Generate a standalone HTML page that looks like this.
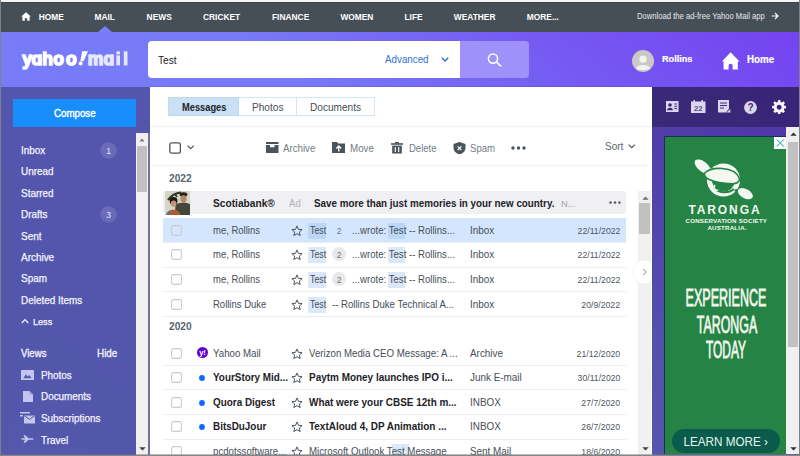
<!DOCTYPE html>
<html><head><meta charset="utf-8"><style>
html,body{margin:0;padding:0;width:800px;height:456px;overflow:hidden;background:#fff}
body{position:relative;font-family:"Liberation Sans",sans-serif}
.r{position:absolute;display:block}
.t{position:absolute;white-space:nowrap}
.logo{font-family:"Liberation Sans",sans-serif;font-weight:bold;font-size:19px;line-height:19px;color:#fff;letter-spacing:-0.2px;transform-origin:0 0;transform:scaleX(1.1)}
</style></head><body>
<div class="r" style="left:0px;top:0px;width:800px;height:456px;background:linear-gradient(40deg,#787ef7 0%,#777af7 55%,#7558f2 78%,#7440f0 100%);"></div>
<div class="r" style="left:0px;top:0px;width:800px;height:2px;background:#f4f4f6;"></div>
<div class="r" style="left:0px;top:2px;width:800px;height:1px;background:#3c434a;"></div>
<div class="r" style="left:0px;top:3px;width:800px;height:29px;background:#464e56;"></div>
<svg class="r" style="left:21px;top:12px;" width="10" height="9" viewBox="0 0 10 9"><path d="M5 0.3 L9.8 4.6 L8.6 4.6 L8.6 8.8 L6.2 8.8 L6.2 6.2 L3.8 6.2 L3.8 8.8 L1.4 8.8 L1.4 4.6 L0.2 4.6 Z" fill="#fff"/></svg>
<div class="t" style="left:38.70px;top:13.00px;font-size:8.4px;line-height:8.4px;color:#fff;font-weight:bold;">HOME</div>
<div class="t" style="left:94.50px;top:13.00px;font-size:8.4px;line-height:8.4px;color:#fff;font-weight:bold;">MAIL</div>
<div class="t" style="left:146.60px;top:13.00px;font-size:8.4px;line-height:8.4px;color:#fff;font-weight:bold;">NEWS</div>
<div class="t" style="left:203.00px;top:13.00px;font-size:8.4px;line-height:8.4px;color:#fff;font-weight:bold;">CRICKET</div>
<div class="t" style="left:272.00px;top:13.00px;font-size:8.4px;line-height:8.4px;color:#fff;font-weight:bold;">FINANCE</div>
<div class="t" style="left:340.40px;top:13.00px;font-size:8.4px;line-height:8.4px;color:#fff;font-weight:bold;">WOMEN</div>
<div class="t" style="left:404.50px;top:13.00px;font-size:8.4px;line-height:8.4px;color:#fff;font-weight:bold;">LIFE</div>
<div class="t" style="left:453.75px;top:13.00px;font-size:8.4px;line-height:8.4px;color:#fff;font-weight:bold;">WEATHER</div>
<div class="t" style="left:526.75px;top:13.00px;font-size:8.4px;line-height:8.4px;color:#fff;font-weight:bold;">MORE...</div>
<div class="t" style="left:636.90px;top:13.00px;font-size:8.27px;line-height:8.27px;color:#e6e8eb;font-weight:normal;transform:scaleX(0.9259);transform-origin:0 0;">Download the ad-free Yahoo Mail app</div>
<svg class="r" style="left:771px;top:12px;" width="8" height="8" viewBox="0 0 8 8"><path d="M0.5 4 H7 M4 1 L7 4 L4 7" stroke="#fff" stroke-width="1.1" fill="none"/></svg>
<svg class="r" style="left:98px;top:26px;" width="14" height="6" viewBox="0 0 14 6"><path d="M0 6 L7 0 L14 6 Z" fill="#787ef7"/></svg>
<svg class="r" style="left:0;top:0" width="150" height="86" viewBox="0 0 150 86" font-family="Liberation Sans" font-weight="bold" font-size="17.5"><text x="22.3635" y="65.4" fill="#fff" stroke="#fff" stroke-width="1.5" stroke-linejoin="round">y</text><text x="31.5325" y="65.4" fill="#fff" stroke="#fff" stroke-width="1.5" stroke-linejoin="round">ɑ</text><text x="42.2785" y="65.4" fill="#fff" stroke="#fff" stroke-width="1.5" stroke-linejoin="round">h</text><text x="53.3175" y="65.4" fill="#fff" stroke="#fff" stroke-width="1.5" stroke-linejoin="round">o</text><text x="66.0675" y="65.4" fill="#fff" stroke="#fff" stroke-width="1.5" stroke-linejoin="round">o</text><text x="87.69675" y="65.4" fill="#e6e8ff" stroke="#e6e8ff" stroke-width="1.5" stroke-linejoin="round">m</text><text x="103.5325" y="65.4" fill="#e6e8ff" stroke="#e6e8ff" stroke-width="1.5" stroke-linejoin="round">ɑ</text><rect x="116.3" y="51.3" width="3.7" height="3.2" rx="1.2" fill="#e6e8ff"/><rect x="116.3" y="55.4" width="3.7" height="10" fill="#e6e8ff"/><rect x="123.8" y="51.3" width="3.7" height="14.1" fill="#e6e8ff"/><path d="M82.2 51.2 L88 51.2 L83.6 61.3 L80.3 61.3 Z" fill="#fff"/><circle cx="80.6" cy="63.4" r="2" fill="#fff"/></svg>
<div class="r" style="left:148px;top:40.5px;width:312px;height:37.0px;background:#fff;border-radius:4px 0 0 4px"></div>
<div class="r" style="left:460px;top:40.5px;width:69px;height:37.0px;background:#a091fa;border-radius:0 4px 4px 0"></div>
<div class="t" style="left:158.10px;top:55.00px;font-size:10.81px;line-height:10.81px;color:#1d2228;font-weight:normal;transform:scaleX(0.9434);transform-origin:0 0;">Test</div>
<div class="t" style="left:385.30px;top:54.00px;font-size:10.58px;line-height:10.58px;color:#2f6fd6;font-weight:normal;transform:scaleX(0.9259);transform-origin:0 0;">Advanced</div>
<svg class="r" style="left:441px;top:57px;" width="8" height="5" viewBox="0 0 8 5"><path d="M0.8 0.8 L4 4 L7.2 0.8" stroke="#2f6fd6" stroke-width="1.4" fill="none"/></svg>
<svg class="r" style="left:487px;top:53px;" width="16" height="14" viewBox="0 0 16 14"><circle cx="6" cy="5.6" r="4.6" stroke="#fff" stroke-width="1.5" fill="none"/><path d="M9.4 9 L14.2 13.4" stroke="#fff" stroke-width="1.6"/></svg>
<svg class="r" style="left:632px;top:50px;" width="22" height="22" viewBox="0 0 22 22"><circle cx="11" cy="11" r="11" fill="#c9c8c4"/><circle cx="11" cy="9.2" r="3.6" fill="#f3f3ef"/><path d="M4.2 18.2 C4.8 13.8 17.2 13.8 17.8 18.2 C15.8 20.8 6.2 20.8 4.2 18.2Z" fill="#f3f3ef"/></svg>
<div class="t" style="left:662.00px;top:54.00px;font-size:9.83px;line-height:9.83px;color:#fff;font-weight:bold;-webkit-text-stroke:0.2px #fff;transform:scaleX(0.9259);transform-origin:0 0;">Rollins</div>
<svg class="r" style="left:722px;top:51.5px;" width="18" height="18" viewBox="0 0 18 18"><path d="M8.6 0.3 L17.4 9.6 L15.8 9.6 L15.8 17.5 L10.6 17.5 L10.6 13.8 A2 2 0 0 0 6.6 13.8 L6.6 17.5 L1.6 17.5 L1.6 9.6 L0 9.6 Z" fill="#fff"/></svg>
<div class="t" style="left:747.40px;top:55.00px;font-size:10.34px;line-height:10.34px;color:#fff;font-weight:bold;-webkit-text-stroke:0.2px #fff;transform:scaleX(0.9434);transform-origin:0 0;">Home</div>
<div class="r" style="left:0px;top:87px;width:150px;height:369px;background:rgba(0,0,0,0.3);"></div>
<div class="r" style="left:13px;top:99px;width:123px;height:28px;background:#188dfc;"></div>
<div class="t" style="left:54.10px;top:108.00px;font-size:10.69px;line-height:10.69px;color:#fff;font-weight:normal;-webkit-text-stroke:0.4px #fff;transform:scaleX(0.9091);transform-origin:0 0;">Compose</div>
<div class="t" style="left:21.20px;top:146.00px;font-size:10.45px;line-height:10.45px;color:#f4f4ff;font-weight:normal;-webkit-text-stroke:0.25px #f4f4ff;transform:scaleX(0.9524);transform-origin:0 0;">Inbox</div>
<div class="t" style="left:21.20px;top:167.00px;font-size:10.45px;line-height:10.45px;color:#f4f4ff;font-weight:normal;-webkit-text-stroke:0.25px #f4f4ff;transform:scaleX(0.9524);transform-origin:0 0;">Unread</div>
<div class="t" style="left:21.20px;top:189.00px;font-size:10.45px;line-height:10.45px;color:#f4f4ff;font-weight:normal;-webkit-text-stroke:0.25px #f4f4ff;transform:scaleX(0.9524);transform-origin:0 0;">Starred</div>
<div class="t" style="left:21.20px;top:210.00px;font-size:10.45px;line-height:10.45px;color:#f4f4ff;font-weight:normal;-webkit-text-stroke:0.25px #f4f4ff;transform:scaleX(0.9524);transform-origin:0 0;">Drafts</div>
<div class="t" style="left:21.20px;top:232.00px;font-size:10.45px;line-height:10.45px;color:#f4f4ff;font-weight:normal;-webkit-text-stroke:0.25px #f4f4ff;transform:scaleX(0.9524);transform-origin:0 0;">Sent</div>
<div class="t" style="left:21.20px;top:253.00px;font-size:10.45px;line-height:10.45px;color:#f4f4ff;font-weight:normal;-webkit-text-stroke:0.25px #f4f4ff;transform:scaleX(0.9524);transform-origin:0 0;">Archive</div>
<div class="t" style="left:21.20px;top:274.00px;font-size:10.45px;line-height:10.45px;color:#f4f4ff;font-weight:normal;-webkit-text-stroke:0.25px #f4f4ff;transform:scaleX(0.9524);transform-origin:0 0;">Spam</div>
<div class="t" style="left:21.20px;top:296.00px;font-size:10.45px;line-height:10.45px;color:#f4f4ff;font-weight:normal;-webkit-text-stroke:0.25px #f4f4ff;transform:scaleX(0.9524);transform-origin:0 0;">Deleted Items</div>
<svg class="r" style="left:100px;top:142.3px;" width="17" height="17" viewBox="0 0 17 17"><circle cx="8.5" cy="8.5" r="8.3" fill="rgba(255,255,255,0.13)"/></svg>
<div class="t" style="left:100px;width:17px;text-align:center;top:146.90px;font-size:8.5px;line-height:8.5px;color:#e8e8ff">1</div>
<svg class="r" style="left:100px;top:206.1px;" width="17" height="17" viewBox="0 0 17 17"><circle cx="8.5" cy="8.5" r="8.3" fill="rgba(255,255,255,0.13)"/></svg>
<div class="t" style="left:100px;width:17px;text-align:center;top:210.70px;font-size:8.5px;line-height:8.5px;color:#e8e8ff">3</div>
<svg class="r" style="left:21.2px;top:317.8px;" width="8" height="6" viewBox="0 0 8 6"><path d="M0.8 5 L4 1.6 L7.2 5" stroke="#f4f4ff" stroke-width="1.3" fill="none"/></svg>
<div class="t" style="left:33.20px;top:317.00px;font-size:9.55px;line-height:9.55px;color:#f4f4ff;font-weight:normal;-webkit-text-stroke:0.25px #f4f4ff;transform:scaleX(0.9524);transform-origin:0 0;">Less</div>
<div class="t" style="left:21.00px;top:349.00px;font-size:10.08px;line-height:10.08px;color:#f4f4ff;font-weight:normal;-webkit-text-stroke:0.3px #f4f4ff;transform:scaleX(0.9524);transform-origin:0 0;">Views</div>
<div class="t" style="left:96.90px;top:349.00px;font-size:10.4px;line-height:10.4px;color:#f4f4ff;font-weight:normal;-webkit-text-stroke:0.3px #f4f4ff;transform:scaleX(0.9524);transform-origin:0 0;">Hide</div>
<div class="t" style="left:41.40px;top:371.00px;font-size:10.4px;line-height:10.4px;color:#f4f4ff;font-weight:normal;-webkit-text-stroke:0.25px #f4f4ff;transform:scaleX(0.9524);transform-origin:0 0;">Photos</div>
<div class="t" style="left:41.40px;top:392.00px;font-size:10.4px;line-height:10.4px;color:#f4f4ff;font-weight:normal;-webkit-text-stroke:0.25px #f4f4ff;transform:scaleX(0.9524);transform-origin:0 0;">Documents</div>
<div class="t" style="left:41.40px;top:414.00px;font-size:10.4px;line-height:10.4px;color:#f4f4ff;font-weight:normal;-webkit-text-stroke:0.25px #f4f4ff;transform:scaleX(0.9524);transform-origin:0 0;">Subscriptions</div>
<div class="t" style="left:41.40px;top:436.00px;font-size:10.4px;line-height:10.4px;color:#f4f4ff;font-weight:normal;-webkit-text-stroke:0.25px #f4f4ff;transform:scaleX(0.9524);transform-origin:0 0;">Travel</div>
<svg class="r" style="left:21px;top:369.5px;" width="13" height="10.5" viewBox="0 0 13 10.5"><rect x="0" y="0" width="13" height="10.5" rx="0.8" fill="#c3c6ee"/><path d="M2.3 8.3 L5 4.3 L6.6 6.6 L8.2 5 L10.7 8.3Z" fill="#5259ad"/></svg>
<svg class="r" style="left:22.5px;top:390.5px;" width="10" height="11" viewBox="0 0 10 11"><path d="M0 0 H6.5 L10 3.5 V11 H0Z" fill="#c3c6ee"/><path d="M6.5 0 V3.5 H10" fill="#9a9ed8"/></svg>
<svg class="r" style="left:20px;top:412px;" width="15" height="11.5" viewBox="0 0 15 11.5"><rect x="0" y="0" width="10" height="1.5" fill="#c3c6ee"/><rect x="0" y="3" width="3" height="1.5" fill="#c3c6ee"/><rect x="4" y="3.5" width="11" height="8" fill="#c3c6ee"/><path d="M4 3.5 L9.5 7.3 L15 3.5" stroke="#5259ad" stroke-width="1" fill="none"/></svg>
<svg class="r" style="left:21px;top:435px;" width="13" height="8" viewBox="0 0 13 8"><path d="M0.5 3.2 L4 3.2 L2.5 0.3 L4.3 0.3 L7.5 3.2 L11.5 3.2 C13 3.4 13 4.6 11.5 4.8 L7.5 4.8 L4.3 7.7 L2.5 7.7 L4 4.8 L0.5 4.8 Z" fill="#c3c6ee"/></svg>
<div class="r" style="left:135.7px;top:133.3px;width:12.300000000000011px;height:322.7px;background:#f0f0f0;"></div>
<div class="r" style="left:148px;top:133.3px;width:2px;height:322.7px;background:#74709c;"></div>
<div class="r" style="left:136.9px;top:146.1px;width:10.299999999999983px;height:46.099999999999994px;background:#c1c1c1;"></div>
<svg class="r" style="left:139px;top:137.5px;" width="6" height="4" viewBox="0 0 6 4"><path d="M0.4 3.6 L3 0.6 L5.6 3.6Z" fill="#7a7a7a"/></svg>
<svg class="r" style="left:138.5px;top:447px;" width="7" height="4" viewBox="0 0 7 4"><path d="M0.3 0.2 L3.5 3.6 L6.7 0.2Z" fill="#404040"/></svg>
<div class="r" style="left:150px;top:86px;width:502px;height:1px;background:rgba(20,20,90,0.12);"></div>
<div class="r" style="left:150px;top:87px;width:502px;height:369px;background:#fff;"></div>
<div class="r" style="left:168px;top:97px;width:206.5px;height:19.200000000000003px;background:#fff;box-sizing:border-box;border:1px solid #d4e5f6"></div>
<div class="r" style="left:168px;top:97px;width:70.6px;height:19.200000000000003px;background:#c9e0f5;box-sizing:border-box;border:1px solid #c2daf0"></div>
<div class="r" style="left:296.2px;top:97px;width:1.0px;height:19.200000000000003px;background:#d4e5f6;"></div>
<div class="t" style="left:181.60px;top:103.00px;font-size:10.23px;line-height:10.23px;color:#1d2228;font-weight:bold;transform:scaleX(0.9091);transform-origin:0 0;">Messages</div>
<div class="t" style="left:252.00px;top:102.00px;font-size:10.71px;line-height:10.71px;color:#464e56;font-weight:normal;transform:scaleX(0.9434);transform-origin:0 0;">Photos</div>
<div class="t" style="left:310.00px;top:102.00px;font-size:10.71px;line-height:10.71px;color:#464e56;font-weight:normal;transform:scaleX(0.9434);transform-origin:0 0;">Documents</div>
<div class="r" style="left:150px;top:125.5px;width:502px;height:1.0px;background:#eff1f4;"></div>
<svg class="r" style="left:168.5px;top:141.5px;" width="12.5" height="12" viewBox="0 0 12.5 12"><rect x="0.8" y="0.8" width="10.6" height="10.4" rx="2" stroke="#4d555d" stroke-width="1.3" fill="none"/></svg>
<svg class="r" style="left:186.5px;top:145px;" width="7.5" height="4.5" viewBox="0 0 7.5 4.5"><path d="M0.6 0.6 L3.7 3.6 L6.8 0.6" stroke="#4d555d" stroke-width="1.2" fill="none"/></svg>
<svg class="r" style="left:266px;top:142px;" width="12.5" height="11" viewBox="0 0 12.5 11"><rect x="0" y="0" width="12.5" height="2" fill="#4b535b"/><path d="M0 3 H4 V5.2 H8.5 V3 H12.5 V11 H0Z" fill="#4b535b"/></svg>
<div class="t" style="left:283.25px;top:144.00px;font-size:10.28px;line-height:10.28px;color:#737b83;font-weight:normal;transform:scaleX(0.9434);transform-origin:0 0;">Archive</div>
<svg class="r" style="left:331.5px;top:142px;" width="13.5" height="11" viewBox="0 0 13.5 11"><path d="M0 0 H5 L6.2 1.6 H13.5 V11 H0Z" fill="#4b535b"/><path d="M6.75 9.5 V4.2 M4.3 6.5 L6.75 4 L9.2 6.5" stroke="#fff" stroke-width="1.3" fill="none"/></svg>
<div class="t" style="left:350.00px;top:144.00px;font-size:10.39px;line-height:10.39px;color:#737b83;font-weight:normal;transform:scaleX(0.9434);transform-origin:0 0;">Move</div>
<svg class="r" style="left:391px;top:142px;" width="12" height="11.5" viewBox="0 0 12 11.5"><rect x="0" y="1.2" width="12" height="1.6" fill="#4b535b"/><rect x="4" y="0" width="4" height="1.5" fill="#4b535b"/><path d="M1.2 3.6 H10.8 V11.5 H1.2Z" fill="#4b535b"/><path d="M4.3 5 V10 M7.7 5 V10" stroke="#fff" stroke-width="1.1"/></svg>
<div class="t" style="left:408.50px;top:144.00px;font-size:10.07px;line-height:10.07px;color:#737b83;font-weight:normal;transform:scaleX(0.9434);transform-origin:0 0;">Delete</div>
<svg class="r" style="left:453px;top:141.5px;" width="13" height="12.5" viewBox="0 0 13 12.5"><path d="M6.5 0 L12.5 2 V6 C12.5 9.3 9.5 11.6 6.5 12.5 C3.5 11.6 0.5 9.3 0.5 6 V2Z" fill="#4b535b"/><path d="M4.6 4.3 L8.4 8.1 M8.4 4.3 L4.6 8.1" stroke="#fff" stroke-width="1.2"/></svg>
<div class="t" style="left:470.00px;top:144.00px;font-size:10.18px;line-height:10.18px;color:#737b83;font-weight:normal;transform:scaleX(0.9434);transform-origin:0 0;">Spam</div>
<svg class="r" style="left:510.5px;top:146px;" width="15" height="4" viewBox="0 0 15 4"><circle cx="2" cy="2" r="1.7" fill="#4b535b"/><circle cx="7.5" cy="2" r="1.7" fill="#4b535b"/><circle cx="13" cy="2" r="1.7" fill="#4b535b"/></svg>
<div class="t" style="left:605.10px;top:141.00px;font-size:10.6px;line-height:10.6px;color:#5b636a;font-weight:normal;transform:scaleX(0.9434);transform-origin:0 0;">Sort</div>
<svg class="r" style="left:628px;top:144px;" width="7.5" height="4.5" viewBox="0 0 7.5 4.5"><path d="M0.6 0.6 L3.7 3.6 L6.8 0.6" stroke="#4d555d" stroke-width="1.2" fill="none"/></svg>
<div class="r" style="left:150px;top:165px;width:498px;height:1px;background:#eff1f4;"></div>
<div class="t" style="left:168.50px;top:173.00px;font-size:10.81px;line-height:10.81px;color:#5b636a;font-weight:bold;transform:scaleX(0.9434);transform-origin:0 0;">2022</div>
<div class="r" style="left:163px;top:190.5px;width:463px;height:23.5px;background:#f0f0f3;border-radius:3px"></div>
<svg class="r" style="left:165px;top:190.5px" width="25" height="24.5" viewBox="0 0 25 24.5"><defs><linearGradient id="cl" x1="0" x2="1"><stop offset="0" stop-color="#2f8a70"/><stop offset="0.5" stop-color="#c0503a"/><stop offset="1" stop-color="#8a6a30"/></linearGradient></defs><rect width="25" height="24.5" fill="#d3d6c6"/><path d="M3 9 C6 5 10 2 16 1.5" stroke="#2c3424" stroke-width="2.2" fill="none"/><path d="M5 6 L8 8 M10 3 L12 6" stroke="#2c3424" stroke-width="1.5"/><path d="M10 24.5 L10.5 14 C12 11 24 11 25 13.5 L25 24.5Z" fill="#45453a"/><ellipse cx="18.5" cy="3.6" rx="3.8" ry="2.4" fill="#2a2018"/><ellipse cx="18.5" cy="8" rx="3.1" ry="3.8" fill="#b48868"/><circle cx="8.6" cy="10" r="3.9" fill="#221a12"/><ellipse cx="8.6" cy="12.6" rx="2.8" ry="3.2" fill="#c49474"/><path d="M1 24.5 C1.5 17.5 15 16.5 15.5 24.5Z" fill="url(#cl)"/></svg>
<div class="t" style="left:213.00px;top:198.00px;font-size:10.81px;line-height:10.81px;color:#1d2228;font-weight:bold;transform:scaleX(0.9434);transform-origin:0 0;">Scotiabank®</div>
<div class="t" style="left:289.00px;top:199.00px;font-size:10.18px;line-height:10.18px;color:#b0b4b9;font-weight:normal;transform:scaleX(0.9434);transform-origin:0 0;">Ad</div>
<div class="t" style="left:313.75px;top:199.00px;font-size:10.42px;line-height:10.42px;color:#1d2228;font-weight:bold;transform:scaleX(0.9434);transform-origin:0 0;">Save more than just memories in your new country.</div>
<div class="t" style="left:561.00px;top:199.00px;font-size:9.86px;line-height:9.86px;color:#9aa0a6;font-weight:normal;transform:scaleX(0.9434);transform-origin:0 0;">N...</div>
<svg class="r" style="left:608.5px;top:201px;" width="12" height="3.5" viewBox="0 0 12 3.5"><circle cx="1.6" cy="1.6" r="1.3" fill="#5b636a"/><circle cx="6" cy="1.6" r="1.3" fill="#5b636a"/><circle cx="10.4" cy="1.6" r="1.3" fill="#5b636a"/></svg>
<div class="r" style="left:163px;top:218px;width:463px;height:24px;background:#d4e6fd;"></div>
<svg class="r" style="left:170.5px;top:224.5px;" width="11" height="11" viewBox="0 0 11 11"><rect x="0.6" y="0.6" width="9.8" height="9.8" rx="1.6" stroke="#c9ccd0" stroke-width="1.1" fill="none"/></svg>
<div class="t" style="left:213.00px;top:226.00px;font-size:10.07px;line-height:10.07px;color:#464e56;font-weight:normal;transform:scaleX(0.9434);transform-origin:0 0;">me, Rollins</div>
<svg class="r" style="left:290.5px;top:224.6px;" width="12" height="11.5" viewBox="0 0 12 11.5"><path d="M6 0.9 L7.45 4.3 L11.1 4.6 L8.35 7 L9.2 10.6 L6 8.7 L2.8 10.6 L3.65 7 L0.9 4.6 L4.55 4.3Z" stroke="#4d555d" stroke-width="1" fill="none" stroke-linejoin="round"/></svg>
<div class="r" style="left:308.4px;top:223px;width:17.600000000000023px;height:15.5px;background:#bcd6f6;"></div>
<div class="t" style="left:309.50px;top:226.00px;font-size:10.38px;line-height:10.38px;color:#464e56;font-weight:normal;transform:scaleX(0.8475);transform-origin:0 0;">Test</div>
<div class="t" style="left:332px;width:14px;text-align:center;top:226.80px;font-size:8.5px;line-height:8.5px;color:#6e767e">2</div>
<div class="r" style="left:388.4px;top:223px;width:16.600000000000023px;height:15.5px;background:#bcd6f6;"></div>
<div class="t" style="left:352.40px;top:226.00px;font-size:10.2px;line-height:10.2px;color:#464e56;font-weight:normal;transform:scaleX(0.9434);transform-origin:0 0;">...wrote: Test -- Rollins...</div>
<div class="t" style="left:470.00px;top:226.00px;font-size:10.49px;line-height:10.49px;color:#464e56;font-weight:normal;transform:scaleX(0.9434);transform-origin:0 0;">Inbox</div>
<div class="t" style="right:180.00px;top:227.00px;font-size:9.22px;line-height:9.22px;color:#50585f;font-weight:normal;transform:scaleX(0.9434);transform-origin:100% 0;">22/11/2022</div>
<div class="r" style="left:163px;top:242px;width:464px;height:1px;background:#eceef1;"></div>
<svg class="r" style="left:170.5px;top:248.5px;" width="11" height="11" viewBox="0 0 11 11"><rect x="0.6" y="0.6" width="9.8" height="9.8" rx="1.6" stroke="#c9ccd0" stroke-width="1.1" fill="none"/></svg>
<div class="t" style="left:213.00px;top:250.00px;font-size:10.07px;line-height:10.07px;color:#464e56;font-weight:normal;transform:scaleX(0.9434);transform-origin:0 0;">me, Rollins</div>
<svg class="r" style="left:290.5px;top:248.6px;" width="12" height="11.5" viewBox="0 0 12 11.5"><path d="M6 0.9 L7.45 4.3 L11.1 4.6 L8.35 7 L9.2 10.6 L6 8.7 L2.8 10.6 L3.65 7 L0.9 4.6 L4.55 4.3Z" stroke="#4d555d" stroke-width="1" fill="none" stroke-linejoin="round"/></svg>
<div class="r" style="left:308.4px;top:247px;width:17.600000000000023px;height:15.5px;background:#dbe8fa;"></div>
<div class="t" style="left:309.50px;top:250.00px;font-size:10.38px;line-height:10.38px;color:#464e56;font-weight:normal;transform:scaleX(0.8475);transform-origin:0 0;">Test</div>
<svg class="r" style="left:332px;top:247px;" width="14" height="14" viewBox="0 0 14 14"><circle cx="7" cy="7" r="7" fill="#e8e9eb"/></svg>
<div class="t" style="left:332px;width:14px;text-align:center;top:250.80px;font-size:8.5px;line-height:8.5px;color:#6e767e">2</div>
<div class="r" style="left:388.4px;top:247px;width:16.600000000000023px;height:15.5px;background:#dbe8fa;"></div>
<div class="t" style="left:352.40px;top:250.00px;font-size:10.2px;line-height:10.2px;color:#464e56;font-weight:normal;transform:scaleX(0.9434);transform-origin:0 0;">...wrote: Test -- Rollins...</div>
<div class="t" style="left:470.00px;top:250.00px;font-size:10.49px;line-height:10.49px;color:#464e56;font-weight:normal;transform:scaleX(0.9434);transform-origin:0 0;">Inbox</div>
<div class="t" style="right:180.00px;top:251.00px;font-size:9.22px;line-height:9.22px;color:#50585f;font-weight:normal;transform:scaleX(0.9434);transform-origin:100% 0;">22/11/2022</div>
<div class="r" style="left:163px;top:267px;width:464px;height:1px;background:#eceef1;"></div>
<svg class="r" style="left:170.5px;top:273.5px;" width="11" height="11" viewBox="0 0 11 11"><rect x="0.6" y="0.6" width="9.8" height="9.8" rx="1.6" stroke="#c9ccd0" stroke-width="1.1" fill="none"/></svg>
<div class="t" style="left:213.00px;top:275.00px;font-size:10.07px;line-height:10.07px;color:#464e56;font-weight:normal;transform:scaleX(0.9434);transform-origin:0 0;">me, Rollins</div>
<svg class="r" style="left:290.5px;top:273.6px;" width="12" height="11.5" viewBox="0 0 12 11.5"><path d="M6 0.9 L7.45 4.3 L11.1 4.6 L8.35 7 L9.2 10.6 L6 8.7 L2.8 10.6 L3.65 7 L0.9 4.6 L4.55 4.3Z" stroke="#4d555d" stroke-width="1" fill="none" stroke-linejoin="round"/></svg>
<div class="r" style="left:308.4px;top:272px;width:17.600000000000023px;height:15.5px;background:#dbe8fa;"></div>
<div class="t" style="left:309.50px;top:275.00px;font-size:10.38px;line-height:10.38px;color:#464e56;font-weight:normal;transform:scaleX(0.8475);transform-origin:0 0;">Test</div>
<svg class="r" style="left:332px;top:272px;" width="14" height="14" viewBox="0 0 14 14"><circle cx="7" cy="7" r="7" fill="#e8e9eb"/></svg>
<div class="t" style="left:332px;width:14px;text-align:center;top:275.80px;font-size:8.5px;line-height:8.5px;color:#6e767e">2</div>
<div class="r" style="left:388.4px;top:272px;width:16.600000000000023px;height:15.5px;background:#dbe8fa;"></div>
<div class="t" style="left:352.40px;top:275.00px;font-size:10.2px;line-height:10.2px;color:#464e56;font-weight:normal;transform:scaleX(0.9434);transform-origin:0 0;">...wrote: Test -- Rollins...</div>
<div class="t" style="left:470.00px;top:275.00px;font-size:10.49px;line-height:10.49px;color:#464e56;font-weight:normal;transform:scaleX(0.9434);transform-origin:0 0;">Inbox</div>
<div class="t" style="right:180.00px;top:276.00px;font-size:9.22px;line-height:9.22px;color:#50585f;font-weight:normal;transform:scaleX(0.9434);transform-origin:100% 0;">22/11/2022</div>
<div class="r" style="left:163px;top:291px;width:464px;height:1px;background:#eceef1;"></div>
<svg class="r" style="left:170.5px;top:298.5px;" width="11" height="11" viewBox="0 0 11 11"><rect x="0.6" y="0.6" width="9.8" height="9.8" rx="1.6" stroke="#c9ccd0" stroke-width="1.1" fill="none"/></svg>
<div class="t" style="left:213.00px;top:300.00px;font-size:10.07px;line-height:10.07px;color:#464e56;font-weight:normal;transform:scaleX(0.9434);transform-origin:0 0;">Rollins Duke</div>
<svg class="r" style="left:290.5px;top:298.6px;" width="12" height="11.5" viewBox="0 0 12 11.5"><path d="M6 0.9 L7.45 4.3 L11.1 4.6 L8.35 7 L9.2 10.6 L6 8.7 L2.8 10.6 L3.65 7 L0.9 4.6 L4.55 4.3Z" stroke="#4d555d" stroke-width="1" fill="none" stroke-linejoin="round"/></svg>
<div class="r" style="left:308.4px;top:297px;width:17.600000000000023px;height:15.5px;background:#dbe8fa;"></div>
<div class="t" style="left:309.50px;top:300.00px;font-size:10.38px;line-height:10.38px;color:#464e56;font-weight:normal;transform:scaleX(0.8475);transform-origin:0 0;">Test</div>
<div class="t" style="left:331.50px;top:300.00px;font-size:10.18px;line-height:10.18px;color:#464e56;font-weight:normal;transform:scaleX(0.9434);transform-origin:0 0;">-- Rollins Duke Technical A...</div>
<div class="t" style="left:470.00px;top:300.00px;font-size:10.49px;line-height:10.49px;color:#464e56;font-weight:normal;transform:scaleX(0.9434);transform-origin:0 0;">Inbox</div>
<div class="t" style="right:180.00px;top:301.00px;font-size:9.22px;line-height:9.22px;color:#50585f;font-weight:normal;transform:scaleX(0.9434);transform-origin:100% 0;">20/9/2022</div>
<div class="r" style="left:163px;top:316px;width:464px;height:1px;background:#eceef1;"></div>
<div class="t" style="left:169.00px;top:321.00px;font-size:10.81px;line-height:10.81px;color:#5b636a;font-weight:bold;transform:scaleX(0.9434);transform-origin:0 0;">2020</div>
<svg class="r" style="left:170.5px;top:347.5px;" width="11" height="11" viewBox="0 0 11 11"><rect x="0.6" y="0.6" width="9.8" height="9.8" rx="1.6" stroke="#c9ccd0" stroke-width="1.1" fill="none"/></svg>
<svg class="r" style="left:197px;top:346.5px;" width="11" height="11" viewBox="0 0 11 11"><circle cx="5.5" cy="5.5" r="5.5" fill="#6001d2"/><text x="5.5" y="8.2" font-family="Liberation Sans" font-weight="bold" font-size="7.5" fill="#fff" text-anchor="middle">y!</text></svg>
<div class="t" style="left:213.00px;top:349.00px;font-size:10.28px;line-height:10.28px;color:#464e56;font-weight:normal;transform:scaleX(0.9434);transform-origin:0 0;">Yahoo Mail</div>
<svg class="r" style="left:290.5px;top:347.6px;" width="12" height="11.5" viewBox="0 0 12 11.5"><path d="M6 0.9 L7.45 4.3 L11.1 4.6 L8.35 7 L9.2 10.6 L6 8.7 L2.8 10.6 L3.65 7 L0.9 4.6 L4.55 4.3Z" stroke="#4d555d" stroke-width="1" fill="none" stroke-linejoin="round"/></svg>
<div class="t" style="left:309.20px;top:349.00px;font-size:10.28px;line-height:10.28px;color:#464e56;font-weight:normal;transform:scaleX(0.9434);transform-origin:0 0;">Verizon Media CEO Message: A ...</div>
<div class="t" style="left:470.00px;top:349.00px;font-size:10.49px;line-height:10.49px;color:#464e56;font-weight:normal;transform:scaleX(0.9434);transform-origin:0 0;">Archive</div>
<div class="t" style="right:180.00px;top:350.00px;font-size:9.22px;line-height:9.22px;color:#50585f;font-weight:normal;transform:scaleX(0.9434);transform-origin:100% 0;">21/12/2020</div>
<div class="r" style="left:163px;top:365px;width:464px;height:1px;background:#eceef1;"></div>
<svg class="r" style="left:170.5px;top:371.5px;" width="11" height="11" viewBox="0 0 11 11"><rect x="0.6" y="0.6" width="9.8" height="9.8" rx="1.6" stroke="#c9ccd0" stroke-width="1.1" fill="none"/></svg>
<svg class="r" style="left:199px;top:374.5px;" width="6" height="6" viewBox="0 0 6 6"><circle cx="3" cy="3" r="2.9" fill="#0f69ff"/></svg>
<div class="t" style="left:213.00px;top:373.00px;font-size:10.49px;line-height:10.49px;color:#1d2228;font-weight:bold;transform:scaleX(0.9434);transform-origin:0 0;">YourStory Mid...</div>
<svg class="r" style="left:290.5px;top:371.6px;" width="12" height="11.5" viewBox="0 0 12 11.5"><path d="M6 0.9 L7.45 4.3 L11.1 4.6 L8.35 7 L9.2 10.6 L6 8.7 L2.8 10.6 L3.65 7 L0.9 4.6 L4.55 4.3Z" stroke="#4d555d" stroke-width="1" fill="none" stroke-linejoin="round"/></svg>
<div class="t" style="left:309.20px;top:372.00px;font-size:10.55px;line-height:10.55px;color:#1d2228;font-weight:bold;transform:scaleX(0.9434);transform-origin:0 0;">Paytm Money launches IPO i...</div>
<div class="t" style="left:470.00px;top:373.00px;font-size:10.49px;line-height:10.49px;color:#464e56;font-weight:normal;transform:scaleX(0.9434);transform-origin:0 0;">Junk E-mail</div>
<div class="t" style="right:180.00px;top:374.00px;font-size:9.22px;line-height:9.22px;color:#50585f;font-weight:normal;transform:scaleX(0.9434);transform-origin:100% 0;">30/11/2020</div>
<div class="r" style="left:163px;top:389px;width:464px;height:1px;background:#eceef1;"></div>
<svg class="r" style="left:170.5px;top:396.5px;" width="11" height="11" viewBox="0 0 11 11"><rect x="0.6" y="0.6" width="9.8" height="9.8" rx="1.6" stroke="#c9ccd0" stroke-width="1.1" fill="none"/></svg>
<svg class="r" style="left:199px;top:399.5px;" width="6" height="6" viewBox="0 0 6 6"><circle cx="3" cy="3" r="2.9" fill="#0f69ff"/></svg>
<div class="t" style="left:213.00px;top:398.00px;font-size:10.49px;line-height:10.49px;color:#1d2228;font-weight:bold;transform:scaleX(0.9434);transform-origin:0 0;">Quora Digest</div>
<svg class="r" style="left:290.5px;top:396.6px;" width="12" height="11.5" viewBox="0 0 12 11.5"><path d="M6 0.9 L7.45 4.3 L11.1 4.6 L8.35 7 L9.2 10.6 L6 8.7 L2.8 10.6 L3.65 7 L0.9 4.6 L4.55 4.3Z" stroke="#4d555d" stroke-width="1" fill="none" stroke-linejoin="round"/></svg>
<div class="t" style="left:309.20px;top:397.00px;font-size:10.55px;line-height:10.55px;color:#1d2228;font-weight:bold;transform:scaleX(0.9434);transform-origin:0 0;">What were your CBSE 12th m...</div>
<div class="t" style="left:470.00px;top:398.00px;font-size:10.49px;line-height:10.49px;color:#464e56;font-weight:normal;transform:scaleX(0.9434);transform-origin:0 0;">INBOX</div>
<div class="t" style="right:180.00px;top:399.00px;font-size:9.22px;line-height:9.22px;color:#50585f;font-weight:normal;transform:scaleX(0.9434);transform-origin:100% 0;">27/7/2020</div>
<div class="r" style="left:163px;top:414px;width:464px;height:1px;background:#eceef1;"></div>
<svg class="r" style="left:170.5px;top:420.5px;" width="11" height="11" viewBox="0 0 11 11"><rect x="0.6" y="0.6" width="9.8" height="9.8" rx="1.6" stroke="#c9ccd0" stroke-width="1.1" fill="none"/></svg>
<svg class="r" style="left:199px;top:423.5px;" width="6" height="6" viewBox="0 0 6 6"><circle cx="3" cy="3" r="2.9" fill="#0f69ff"/></svg>
<div class="t" style="left:213.00px;top:422.00px;font-size:10.49px;line-height:10.49px;color:#1d2228;font-weight:bold;transform:scaleX(0.9434);transform-origin:0 0;">BitsDuJour</div>
<svg class="r" style="left:290.5px;top:420.6px;" width="12" height="11.5" viewBox="0 0 12 11.5"><path d="M6 0.9 L7.45 4.3 L11.1 4.6 L8.35 7 L9.2 10.6 L6 8.7 L2.8 10.6 L3.65 7 L0.9 4.6 L4.55 4.3Z" stroke="#4d555d" stroke-width="1" fill="none" stroke-linejoin="round"/></svg>
<div class="t" style="left:309.20px;top:421.00px;font-size:10.55px;line-height:10.55px;color:#1d2228;font-weight:bold;transform:scaleX(0.9434);transform-origin:0 0;">TextAloud 4, DP Animation ...</div>
<div class="t" style="left:470.00px;top:422.00px;font-size:10.49px;line-height:10.49px;color:#464e56;font-weight:normal;transform:scaleX(0.9434);transform-origin:0 0;">INBOX</div>
<div class="t" style="right:180.00px;top:423.00px;font-size:9.22px;line-height:9.22px;color:#50585f;font-weight:normal;transform:scaleX(0.9434);transform-origin:100% 0;">26/7/2020</div>
<div class="r" style="left:163px;top:439px;width:464px;height:1px;background:#eceef1;"></div>
<svg class="r" style="left:170.5px;top:445.5px;" width="11" height="11" viewBox="0 0 11 11"><rect x="0.6" y="0.6" width="9.8" height="9.8" rx="1.6" stroke="#c9ccd0" stroke-width="1.1" fill="none"/></svg>
<div class="t" style="left:213.00px;top:447.00px;font-size:10.28px;line-height:10.28px;color:#464e56;font-weight:normal;transform:scaleX(0.9434);transform-origin:0 0;">pcdotssoftware...</div>
<svg class="r" style="left:290.5px;top:445.6px;" width="12" height="11.5" viewBox="0 0 12 11.5"><path d="M6 0.9 L7.45 4.3 L11.1 4.6 L8.35 7 L9.2 10.6 L6 8.7 L2.8 10.6 L3.65 7 L0.9 4.6 L4.55 4.3Z" stroke="#4d555d" stroke-width="1" fill="none" stroke-linejoin="round"/></svg>
<div class="r" style="left:391.9px;top:444px;width:17.0px;height:15.5px;background:#dbe8fa;"></div>
<div class="t" style="left:309.20px;top:447.00px;font-size:10.28px;line-height:10.28px;color:#464e56;font-weight:normal;transform:scaleX(0.9434);transform-origin:0 0;">Microsoft Outlook Test Message</div>
<div class="t" style="left:470.00px;top:447.00px;font-size:10.49px;line-height:10.49px;color:#464e56;font-weight:normal;transform:scaleX(0.9434);transform-origin:0 0;">Sent Mail</div>
<div class="t" style="right:180.00px;top:448.00px;font-size:9.22px;line-height:9.22px;color:#50585f;font-weight:normal;transform:scaleX(0.9434);transform-origin:100% 0;">18/6/2020</div>
<div class="r" style="left:638.2px;top:190.6px;width:12.799999999999955px;height:265.4px;background:#f1f1f1;"></div>
<div class="r" style="left:639.2px;top:202.8px;width:10.799999999999955px;height:31.19999999999999px;background:#c1c1c1;"></div>
<svg class="r" style="left:641.5px;top:195.5px;" width="7" height="4" viewBox="0 0 7 4"><path d="M0.3 3.8 L3.5 0.4 L6.7 3.8Z" fill="#707070"/></svg>
<svg class="r" style="left:641.5px;top:447px;" width="7" height="4" viewBox="0 0 7 4"><path d="M0.3 0.2 L3.5 3.6 L6.7 0.2Z" fill="#404040"/></svg>
<svg class="r" style="left:632px;top:259px;overflow:hidden" width="20" height="26" viewBox="0 0 20 26"><circle cx="13" cy="13" r="12" fill="#fff" stroke="#f2f3f5" stroke-width="1"/><path d="M11.2 10 L14 13 L11.2 16" stroke="#b0b5ba" stroke-width="1.1" fill="none"/></svg>
<div class="r" style="left:652px;top:87px;width:148px;height:369px;background:rgba(0,0,0,0.3);"></div>
<div class="r" style="left:652px;top:87px;width:148px;height:40px;background:rgba(0,0,0,0.29);"></div>
<svg class="r" style="left:665.5px;top:101px;" width="13" height="11" viewBox="0 0 13 11"><rect x="0" y="0" width="12.5" height="11" fill="#dcd7ee"/><circle cx="4" cy="4" r="1.8" fill="#3c287a"/><path d="M1 9.3 C1.3 6 6.7 6 7 9.3Z" fill="#3c287a"/><path d="M8.3 3 H11 M8.3 5.3 H11 M8.3 7.6 H11" stroke="#3c287a" stroke-width="1"/></svg>
<svg class="r" style="left:690.5px;top:99.5px;" width="15" height="13" viewBox="0 0 15 13"><rect x="0" y="1.5" width="14.5" height="11.5" fill="#dcd7ee"/><rect x="2.5" y="0" width="1.5" height="2.5" fill="#dcd7ee"/><rect x="10.5" y="0" width="1.5" height="2.5" fill="#dcd7ee"/><text x="7.25" y="11.2" font-family="Liberation Sans" font-weight="bold" font-size="7.8" fill="#5a4a8a" text-anchor="middle">22</text></svg>
<svg class="r" style="left:718px;top:100px;" width="12.5" height="13" viewBox="0 0 12.5 13"><path d="M0 0 H11 V8.5 L8 12.5 H0Z" fill="#dcd7ee"/><path d="M2 3 H9 M2 5.5 H9 M2 8 H6" stroke="#3c287a" stroke-width="1"/><path d="M8.5 12.5 L12.3 9 V12.5Z" fill="#dcd7ee"/></svg>
<svg class="r" style="left:743.5px;top:100.5px;" width="13" height="13" viewBox="0 0 13 13"><circle cx="6.5" cy="6.5" r="6.4" fill="#dcd7ee"/><text x="6.5" y="10.3" font-family="Liberation Sans" font-weight="bold" font-size="10" fill="#3c287a" text-anchor="middle">?</text></svg>
<svg class="r" style="left:772px;top:99.5px;" width="14.4" height="14.4" viewBox="0 0 14.4 14.4"><path fill="#f6f4fc" d="M6.1 0 H8.3 L8.6 1.9 L9.9 2.5 L11.4 1.3 L13 2.9 L11.8 4.4 L12.4 5.8 L14.3 6.1 V8.3 L12.4 8.6 L11.8 10 L13 11.5 L11.4 13.1 L9.9 11.9 L8.6 12.5 L8.3 14.4 H6.1 L5.8 12.5 L4.4 11.9 L2.9 13.1 L1.3 11.5 L2.5 10 L1.9 8.6 L0 8.3 V6.1 L1.9 5.8 L2.5 4.4 L1.3 2.9 L2.9 1.3 L4.4 2.5 L5.8 1.9Z M7.2 4.7 A2.5 2.5 0 1 0 7.2 9.7 A2.5 2.5 0 1 0 7.2 4.7Z"/></svg>
<div class="r" style="left:664px;top:136px;width:123px;height:318px;background:#248345;box-sizing:border-box;border-left:1px solid #15334a;border-top:1px solid #15334a;border-right:1px solid #1c6a3c"></div>
<div class="r" style="left:774px;top:137px;width:12px;height:12px;background:#fbfdfc;"></div>
<svg class="r" style="left:775px;top:138px;" width="10" height="10" viewBox="0 0 10 10"><path d="M1.8 1.5 L8.8 8.5 M8.8 1.5 L1.8 8.5" stroke="#35a3b5" stroke-width="1.05"/></svg>
<svg class="r" style="left:688px;top:152px;" width="72" height="54" viewBox="0 0 72 54"><g fill="#f4f8f0"><ellipse cx="14.8" cy="14.6" rx="9.8" ry="4.9" transform="rotate(38 14.8 14.6)"/><circle cx="35.5" cy="28" r="16.6"/><ellipse cx="57.3" cy="41.6" rx="8.2" ry="4.6" transform="rotate(28 57.3 41.6)"/></g><circle cx="35.5" cy="28" r="11.5" fill="#248345"/><path d="M16.6 21.3 C20 17.5 27 16 34 16.5 C42 17 49 20 51.5 26.5 C52 30 48.5 32 44 31.8 C36 31.5 27 30 21 27.5 C18 26 16 24 16.6 21.3Z" fill="#f4f8f0" stroke="#248345" stroke-width="1.6"/><path d="M26 36 C30 41 40 42 46 37" stroke="#248345" stroke-width="2" fill="none"/><circle cx="48.2" cy="38.6" r="1.6" fill="#248345"/><path d="M27 33 C25 36 27 39 30 38" stroke="#f4f8f0" stroke-width="1.5" fill="none"/></svg>
<div class="t" style="left:688.40px;top:204.00px;font-size:12px;line-height:12px;color:#f4f8f0;font-weight:bold;letter-spacing:1.9px">TARONGA</div>
<div class="t" style="left:685.50px;top:218.00px;font-size:6.2px;line-height:6.2px;color:#f4f8f0;font-weight:bold;letter-spacing:0.2px">CONSERVATION SOCIETY</div>
<div class="t" style="left:707.40px;top:225.00px;font-size:6.2px;line-height:6.2px;color:#f4f8f0;font-weight:bold;letter-spacing:0.2px">AUSTRALIA.</div>
<div class="t" style="left:626.2px;width:200px;text-align:center;top:286.16px;font-size:24.14px;line-height:24.14px;color:#f2f7ec;font-weight:normal;-webkit-text-stroke:0.8px #f2f7ec;transform:scaleX(0.52)">EXPERIENCE</div>
<div class="t" style="left:627px;width:200px;text-align:center;top:312.60px;font-size:23.87px;line-height:23.87px;color:#f2f7ec;font-weight:normal;-webkit-text-stroke:0.8px #f2f7ec;transform:scaleX(0.52)">TARONGA</div>
<div class="t" style="left:626.4px;width:200px;text-align:center;top:339.09px;font-size:23.05px;line-height:23.05px;color:#f2f7ec;font-weight:normal;-webkit-text-stroke:0.8px #f2f7ec;transform:scaleX(0.52)">TODAY</div>
<div class="r" style="left:672px;top:428.7px;width:107.5px;height:23.900000000000034px;background:#0b5b4d;border-radius:12px"></div>
<div class="t" style="left:672px;width:107.5px;text-align:center;top:434.99px;font-size:13.6px;line-height:13.6px;color:#e4f6ec;transform:scaleX(0.86)">LEARN MORE ›</div>
<div class="r" style="left:786px;top:127px;width:13px;height:327px;background:#f0f0f0;"></div>
<div class="r" style="left:788px;top:142px;width:10px;height:205px;background:#c1c1c1;"></div>
<svg class="r" style="left:789.5px;top:131.5px;" width="7" height="4" viewBox="0 0 7 4"><path d="M0.3 3.8 L3.5 0.4 L6.7 3.8Z" fill="#303030"/></svg>
<svg class="r" style="left:789.5px;top:446.5px;" width="7" height="4" viewBox="0 0 7 4"><path d="M0.3 0.2 L3.5 3.6 L6.7 0.2Z" fill="#303030"/></svg>
<div class="r" style="left:0px;top:454px;width:800px;height:1px;background:rgba(120,120,125,0.5);"></div>
<div class="r" style="left:0px;top:455px;width:800px;height:1px;background:#858588;"></div>
<div class="r" style="left:0px;top:0px;width:1px;height:456px;background:#7c8288;"></div>
<div class="r" style="left:799px;top:0px;width:1px;height:456px;background:#7c8288;"></div>
</body></html>
